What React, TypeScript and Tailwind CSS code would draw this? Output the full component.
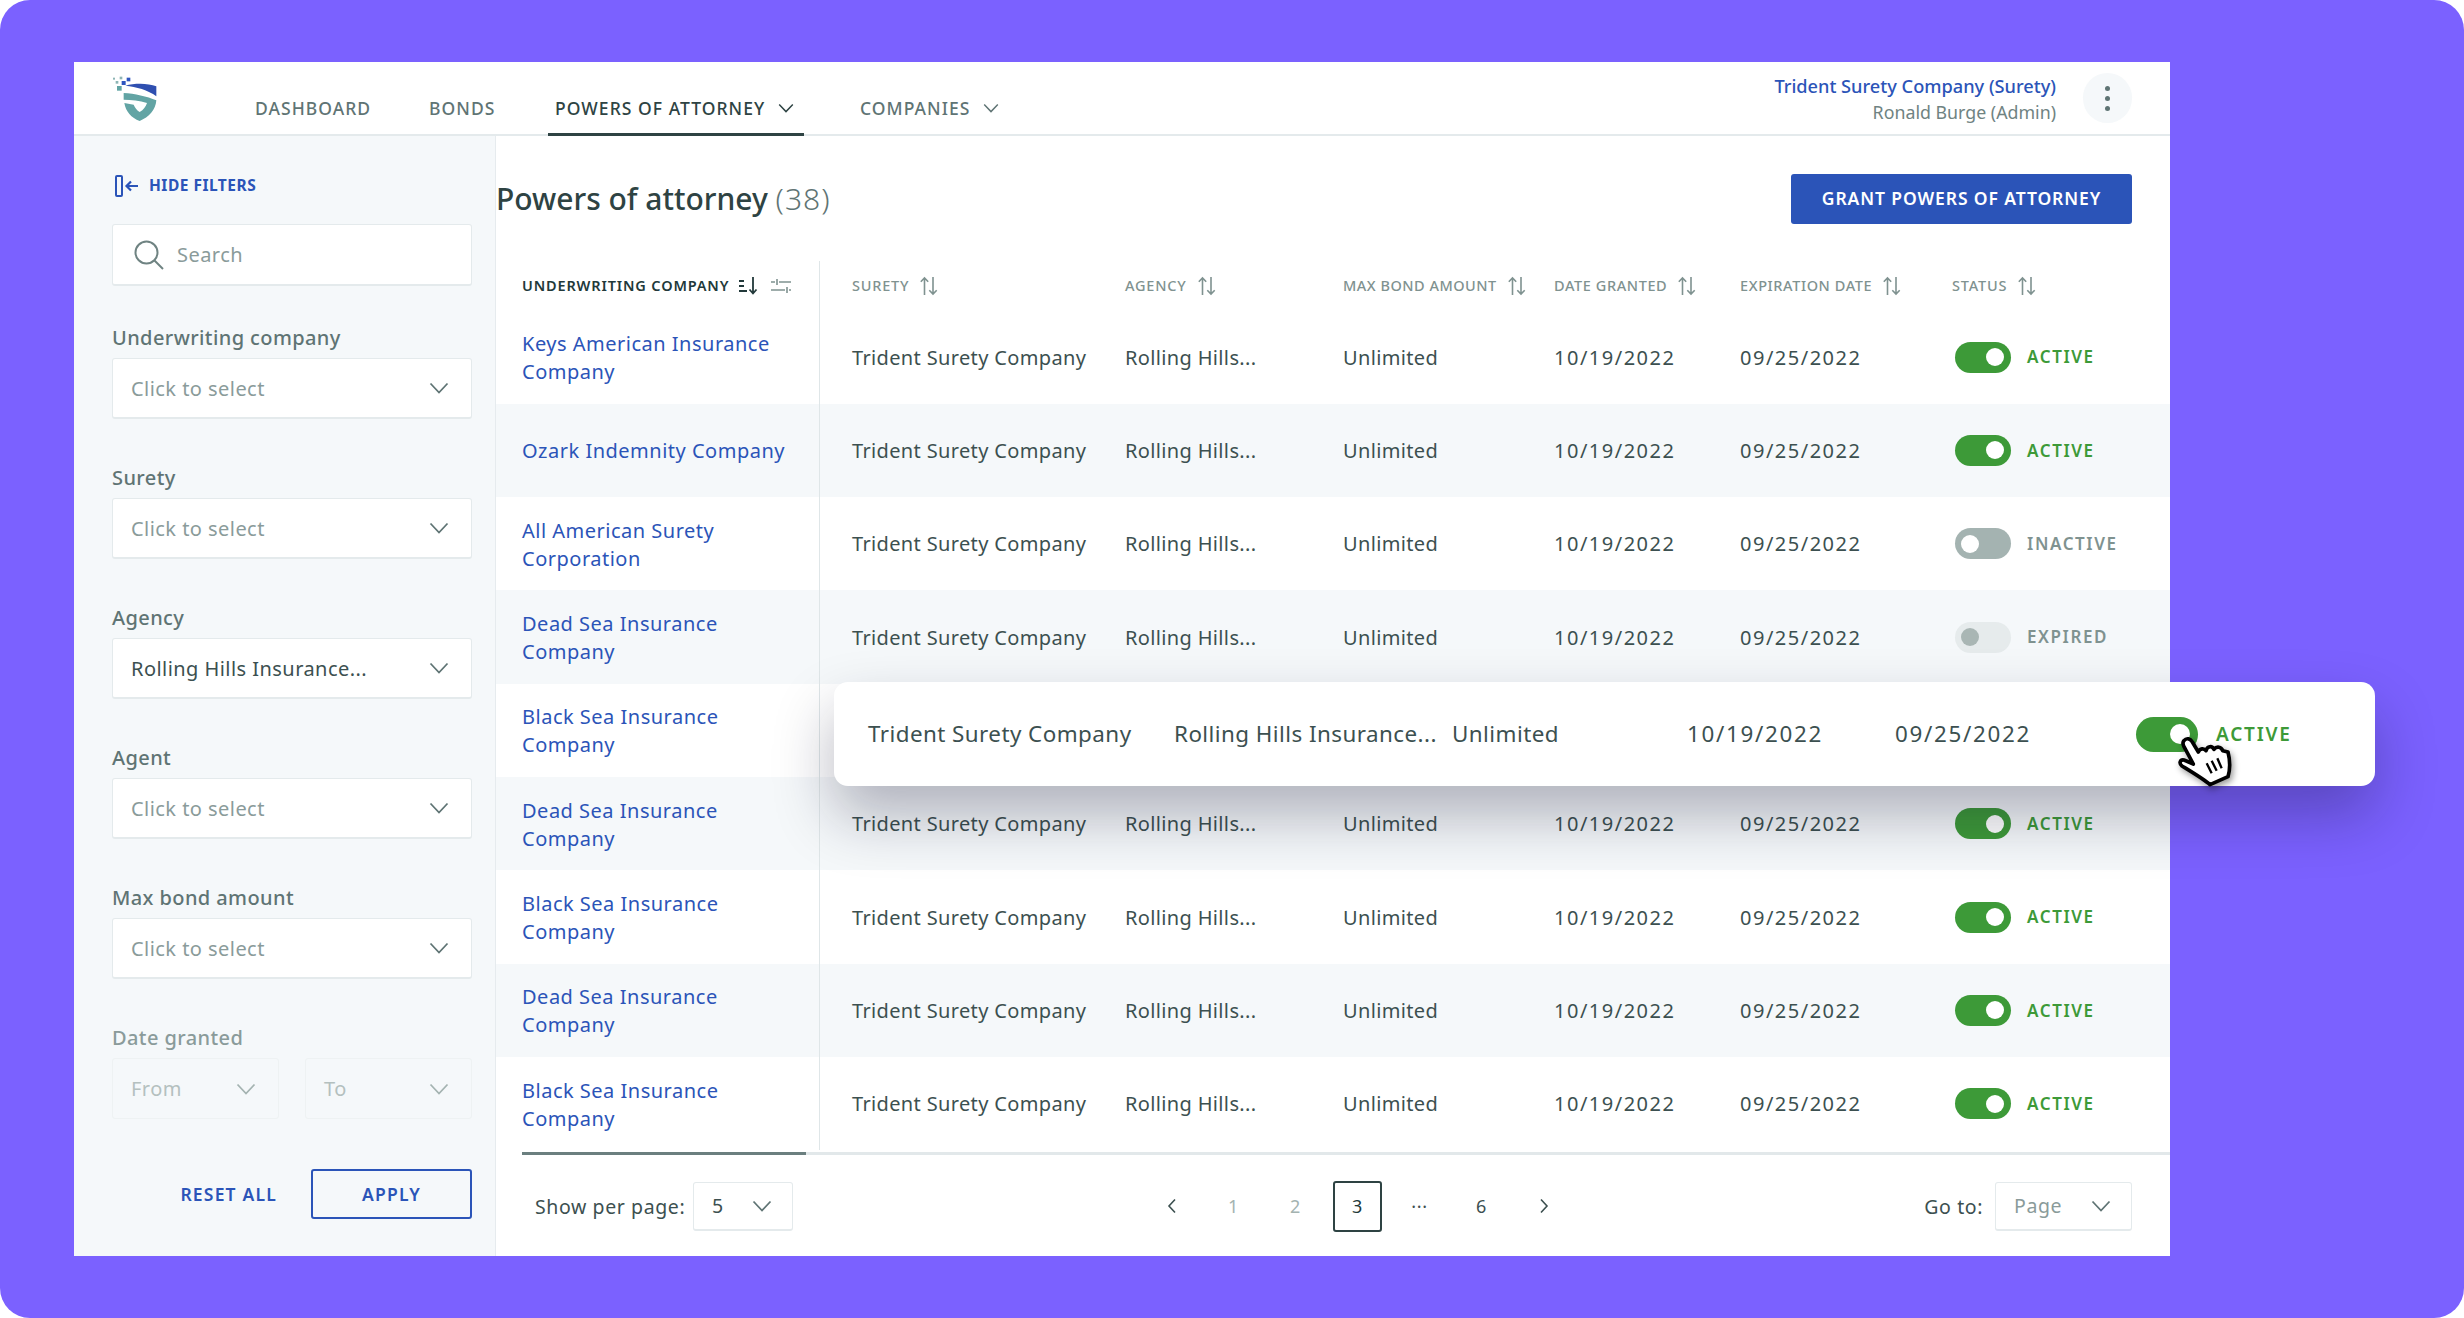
import React from "react";

const FONT = "font-['Noto_Sans','Liberation_Sans',sans-serif]";

function Chevron({ className = "text-[#5f7474]" }: { className?: string }) {
  return (
    <svg width="20" height="12" viewBox="0 0 20 12" fill="none" className={className}>
      <path d="M1.5 1.5 10 10.5l8.5-9" stroke="currentColor" strokeWidth="1.8" />
    </svg>
  );
}

function SortIcon() {
  return (
    <svg width="20" height="20" viewBox="0 0 20 20" fill="none" className="text-[#7f9290]">
      <path d="M5.5 19V2M1.8 5.8 5.5 2l3.7 3.8M14 1v17M10.3 14.2 14 18l3.7-3.8" stroke="currentColor" strokeWidth="1.6" />
    </svg>
  );
}

function Logo() {
  return (
    <svg width="44" height="46" viewBox="160 80 132 136">
      <path d="M197 108C225 100 265 100 290 110L290 140C265 120 230 112 197 108Z" fill="#2f4fb0" />
      <path d="M192 130C225 132 262 140 290 152C288 180 268 203 240 214C215 205 198 185 194 160L222 165C226 175 232 182 240 187C252 180 258 172 262 160C240 152 215 150 192 150Z" fill="#62a4a4" />
      <rect x="172" y="109" width="14" height="14" fill="#62a4a4" />
      <rect x="186" y="94" width="12" height="12" fill="#2f55c0" />
      <rect x="201" y="84" width="11" height="11" fill="#2f55c0" />
      <rect x="168" y="94" width="8" height="8" fill="#8db5b5" />
      <rect x="180" y="81" width="8" height="8" fill="#8db5b5" />
      <rect x="160" y="84" width="6" height="6" fill="#8db5b5" />
    </svg>
  );
}

function NavItem({ label, x, active, chevron }: { label: string; x: string; active?: boolean; chevron?: boolean }) {
  return (
    <div className={`absolute top-0 flex items-center gap-[13px] text-[17.5px] font-medium tracking-[1.05px] whitespace-nowrap ${active ? "text-[#2e4343]" : "text-[#5f7474]"} ${x}`}>
      <span>{label}</span>
      {chevron && <Chevron className={`w-[16px] h-[10px] ${active ? "text-[#2e4343]" : "text-[#5f7474]"}`} />}
    </div>
  );
}

function Field({ label, value, dark }: { label: string; value: string; dark?: boolean }) {
  return (
    <div className="flex flex-col mb-[44px]">
      <div className="h-[30px] flex items-center text-[20px] font-medium tracking-[0.4px] text-[#5f7474]">{label}</div>
      <div className="mt-[5px] h-[61px] bg-white border border-[#e4eaec] border-b-2 rounded-[3px] flex items-center justify-between pl-[18px] pr-[22px]">
        <span className={`text-[20px] tracking-[0.45px] pt-[1px] ${dark ? "text-[#3c5050]" : "text-[#8a9b9a]"}`}>{value}</span>
        <Chevron />
      </div>
    </div>
  );
}

function Toggle({ status }: { status: "ACTIVE" | "INACTIVE" | "EXPIRED" }) {
  if (status === "ACTIVE")
    return (
      <div className="flex items-center gap-[16px]">
        <div className="w-[56px] h-[31px] rounded-full bg-[#3d9a38] flex items-center justify-end pr-[7px]">
          <div className="w-[18px] h-[18px] rounded-full bg-white" />
        </div>
        <span className="text-[17px] font-semibold tracking-[1.6px] text-[#3d9a38]">ACTIVE</span>
      </div>
    );
  if (status === "INACTIVE")
    return (
      <div className="flex items-center gap-[16px]">
        <div className="w-[56px] h-[31px] rounded-full bg-[#a4b3b1] flex items-center pl-[6px]">
          <div className="w-[18px] h-[18px] rounded-full bg-white" />
        </div>
        <span className="text-[17px] font-semibold tracking-[1.6px] text-[#7f9290]">INACTIVE</span>
      </div>
    );
  return (
    <div className="flex items-center gap-[16px]">
      <div className="w-[56px] h-[31px] rounded-full bg-[#e6ebec] flex items-center pl-[6px]">
        <div className="w-[18px] h-[18px] rounded-full bg-[#a9b6b4]" />
      </div>
      <span className="text-[17px] font-semibold tracking-[1.6px] text-[#7f9290]">EXPIRED</span>
    </div>
  );
}

const GRID = "grid grid-cols-[324px_305px_218px_211px_186px_212px_218px]";

const rows: { l1: string; l2?: string; status: "ACTIVE" | "INACTIVE" | "EXPIRED"; hidden?: boolean }[] = [
  { l1: "Keys American Insurance", l2: "Company", status: "ACTIVE" },
  { l1: "Ozark Indemnity Company", status: "ACTIVE" },
  { l1: "All American Surety", l2: "Corporation", status: "INACTIVE" },
  { l1: "Dead Sea Insurance", l2: "Company", status: "EXPIRED" },
  { l1: "Black Sea Insurance", l2: "Company", status: "ACTIVE", hidden: true },
  { l1: "Dead Sea Insurance", l2: "Company", status: "ACTIVE" },
  { l1: "Black Sea Insurance", l2: "Company", status: "ACTIVE" },
  { l1: "Dead Sea Insurance", l2: "Company", status: "ACTIVE" },
  { l1: "Black Sea Insurance", l2: "Company", status: "ACTIVE" },
];

function HeadCell({ label, pl, track }: { label: string; pl?: boolean; track?: string }) {
  return (
    <div className={`flex items-center gap-[10px] text-[14.5px] font-medium text-[#7f9290] ${track ?? "tracking-[0.8px]"} ${pl ? "pl-[32px]" : ""}`}>
      <span>{label}</span>
      <SortIcon />
    </div>
  );
}

function PageNum({ n, tone }: { n: string; tone: string }) {
  return <div className={`w-[49px] h-[51px] flex items-center justify-center text-[18px] ${tone}`}>{n}</div>;
}

export default function App() {
  return (
    <div className={`w-[2464px] h-[1318px] bg-white ${FONT}`}>
      <div className="w-full h-full bg-[#7b61ff] rounded-[30px] pl-[74px] pt-[62px]">
        <div className="relative w-[2096px] h-[1194px] bg-white flex flex-col">
          {/* Header */}
          <header className="h-[74px] shrink-0 border-b-2 border-[#e4eaec] flex relative">
            <div className="ml-[39px] mt-[14px] w-[44px] h-[46px]">
              <Logo />
            </div>
            <div className="relative ml-[98px] w-[800px] mt-[33px]">
              <NavItem label="DASHBOARD" x="left-0" />
              <NavItem label="BONDS" x="left-[174px]" />
              <NavItem label="POWERS OF ATTORNEY" x="left-[300px]" active chevron />
              <NavItem label="COMPANIES" x="left-[605px]" chevron />
              <div className="absolute left-[293px] top-[38px] w-[256px] h-[3px] bg-[#2e4343]" />
            </div>
            <div className="ml-auto mr-[38px] flex items-center gap-[27px]">
              <div className="flex flex-col items-end pt-[3px]">
                <span className="text-[18.2px] leading-[25px] font-medium text-[#2b54b8]">Trident Surety Company (Surety)</span>
                <span className="text-[17.8px] leading-[27px] text-[#6f8382]">Ronald Burge (Admin)</span>
              </div>
              <div className="w-[49px] h-[50px] rounded-full bg-[#f5f8fa] flex flex-col items-center justify-center gap-[5px]">
                <div className="w-[5px] h-[5px] rounded-full bg-[#5f7474]" />
                <div className="w-[5px] h-[5px] rounded-full bg-[#5f7474]" />
                <div className="w-[5px] h-[5px] rounded-full bg-[#5f7474]" />
              </div>
            </div>
          </header>

          <div className="flex flex-1 min-h-0">
            {/* Sidebar */}
            <aside className="w-[422px] shrink-0 bg-[#f5f8fa] border-r border-[#e6ebee] pl-[38px] pr-[23px] pt-[38px]">
              <div className="h-[24px] flex items-center text-[#2b54b8]">
                <svg width="26" height="22" viewBox="0 0 26 22" fill="none" className="ml-[3px]">
                  <rect x="1" y="1" width="6" height="20" rx="1" stroke="currentColor" strokeWidth="2" />
                  <path d="M23 11H12M16 6.5 11.5 11l4.5 4.5" stroke="currentColor" strokeWidth="2.2" />
                </svg>
                <span className="ml-[8px] text-[15.5px] font-bold tracking-[0.5px]">HIDE FILTERS</span>
              </div>
              <div className="mt-[26px] h-[62px] bg-white border border-[#e4eaec] border-b-2 rounded-[3px] flex items-center pl-[20px]">
                <svg width="32" height="32" viewBox="0 0 32 32" fill="none" className="text-[#6f8382]">
                  <circle cx="13.5" cy="13.5" r="11" stroke="currentColor" strokeWidth="2" />
                  <path d="M21.5 21.5 30 30" stroke="currentColor" strokeWidth="2" />
                </svg>
                <span className="ml-[12px] text-[20px] tracking-[0.45px] text-[#8a9b9a]">Search</span>
              </div>
              <div className="mt-[37px] flex flex-col">
                <Field label="Underwriting company" value="Click to select" />
                <Field label="Surety" value="Click to select" />
                <Field label="Agency" value="Rolling Hills Insurance..." dark />
                <Field label="Agent" value="Click to select" />
                <Field label="Max bond amount" value="Click to select" />
              </div>
              <div className="h-[30px] flex items-center text-[20px] font-medium tracking-[0.4px] text-[#8a9b9a]">Date granted</div>
              <div className="mt-[5px] flex gap-[26px]">
                <div className="w-[167px] h-[61px] border border-[#eef2f3] rounded-[3px] flex items-center justify-between pl-[18px] pr-[22px]">
                  <span className="text-[20px] tracking-[0.45px] text-[#b4c0bf]">From</span>
                  <Chevron className="text-[#a4b3b1]" />
                </div>
                <div className="w-[167px] h-[61px] border border-[#eef2f3] rounded-[3px] flex items-center justify-between pl-[18px] pr-[22px]">
                  <span className="text-[20px] tracking-[0.45px] text-[#b4c0bf]">To</span>
                  <Chevron className="text-[#a4b3b1]" />
                </div>
              </div>
              <div className="mt-[50px] flex items-center justify-end gap-[34px]">
                <span className="text-[17.5px] font-semibold tracking-[1.2px] text-[#2b54b8]">RESET ALL</span>
                <div className="w-[161px] h-[50px] border-2 border-[#2b54b8] rounded-[3px] flex items-center justify-center text-[17.5px] font-semibold tracking-[1.2px] text-[#2b54b8]">
                  APPLY
                </div>
              </div>
            </aside>

            {/* Main */}
            <main className="flex-1 min-w-0 flex flex-col">
              <div className="h-[125px] shrink-0 flex items-center justify-between pr-[38px]">
                <h1 className="text-[30px] font-medium text-[#2e4343]">
                  Powers of attorney <span className="font-light tracking-[1px] text-[#5f7474]">(38)</span>
                </h1>
                <div className="w-[341px] h-[50px] bg-[#2b54b8] rounded-[3px] flex items-center justify-center text-[17.5px] font-semibold tracking-[0.9px] text-white">
                  GRANT POWERS OF ATTORNEY
                </div>
              </div>

              <div className={`${GRID} h-[49.5px] shrink-0`}>
                <div className="flex items-center pl-[26px] border-r border-[#dfe6e8] text-[14.5px] font-semibold tracking-[0.85px] text-[#22393a] whitespace-nowrap">
                  <span>UNDERWRITING COMPANY</span>
                  <svg width="22" height="20" viewBox="0 0 22 20" fill="none" className="ml-[9px] shrink-0">
                    <path d="M1 5h5M1 10h5M1 15h8M15 1v16M11.5 13.5 15 17.5l3.5-4" stroke="#22393a" strokeWidth="1.8" />
                  </svg>
                  <svg width="22" height="16" viewBox="0 0 22 16" fill="none" className="ml-[10px] shrink-0">
                    <path d="M1 4h4M9 4h12M7 1v6M1 12h14M19 12h2M17 9v6" stroke="#7f9290" strokeWidth="1.6" />
                  </svg>
                </div>
                <HeadCell label="SURETY" pl />
                <HeadCell label="AGENCY" />
                <HeadCell label="MAX BOND AMOUNT" track="tracking-[0.5px]" />
                <HeadCell label="DATE GRANTED" track="tracking-[0.6px]" />
                <HeadCell label="EXPIRATION DATE" track="tracking-[0.6px]" />
                <HeadCell label="STATUS" />
              </div>

              {rows.map((r, i) => (
                <div key={i} className={`${GRID} h-[93.33px] shrink-0 text-[20px] tracking-[0.35px] text-[#3c5050] ${i % 2 === 1 ? "bg-[#f5f8fa]" : "bg-white"}`}>
                  <div className="flex flex-col justify-center pl-[26px] pt-[2px] border-r border-[#dfe6e8] text-[#2b54b8] leading-[28px] tracking-[0.5px]">
                    <span>{r.l1}</span>
                    {r.l2 && <span>{r.l2}</span>}
                  </div>
                  {!r.hidden && (
                    <>
                      <div className="flex items-center pl-[32px] pt-[1px]">Trident Surety Company</div>
                      <div className="flex items-center pt-[1px]">Rolling Hills...</div>
                      <div className="flex items-center pt-[1px]">Unlimited</div>
                      <div className="flex items-center pt-[1px] tracking-[1.5px]">10/19/2022</div>
                      <div className="flex items-center pt-[1px] tracking-[1.5px]">09/25/2022</div>
                      <div className="flex items-center pl-[3px]">
                        <Toggle status={r.status} />
                      </div>
                    </>
                  )}
                </div>
              ))}

              <div className="mt-[1.5px] h-[3px] ml-[26px] bg-[#e2e8ea] shrink-0">
                <div className="w-[284px] h-full bg-[#6b7f7f]" />
              </div>

              {/* Footer */}
              <div className="flex-1 flex items-center pl-[38px] pr-[38px] pt-[2px] text-[19.5px] tracking-[0.6px] text-[#3c5050]">
                <div className="flex items-center w-[259px] justify-between whitespace-nowrap">
                  <span className="pl-[1px]">Show per page:</span>
                  <div className="w-[100px] h-[49px] shrink-0 border border-[#e4eaec] border-b-2 rounded-[3px] flex items-center justify-between pl-[18px] pr-[20px]">
                    <span>5</span>
                    <Chevron />
                  </div>
                </div>
                <div className="ml-[354px] flex items-center gap-[13px]">
                  <div className="w-[49px] flex justify-center">
                    <svg width="10" height="16" viewBox="0 0 10 16" fill="none"><path d="M8 1.5 2 8l6 6.5" stroke="#3c5050" strokeWidth="1.6" /></svg>
                  </div>
                  <PageNum n="1" tone="text-[#a4b3b1]" />
                  <PageNum n="2" tone="text-[#a4b3b1]" />
                  <div className="w-[49px] h-[51px] border-2 border-[#2e4343] rounded-[3px] flex items-center justify-center text-[18px] text-[#22393a]">3</div>
                  <PageNum n="···" tone="text-[#3c5050]" />
                  <PageNum n="6" tone="text-[#3c5050]" />
                  <div className="w-[49px] flex justify-center">
                    <svg width="10" height="16" viewBox="0 0 10 16" fill="none"><path d="M2 1.5 8 8l-6 6.5" stroke="#3c5050" strokeWidth="1.6" /></svg>
                  </div>
                </div>
                <div className="ml-auto flex items-center gap-[12px]">
                  <span>Go to:</span>
                  <div className="w-[137px] h-[49px] border border-[#e4eaec] border-b-2 rounded-[3px] flex items-center justify-between pl-[18px] pr-[20px]">
                    <span className="text-[#8a9b9a]">Page</span>
                    <Chevron />
                  </div>
                </div>
              </div>
            </main>
          </div>

          {/* Floating row */}
          <div className="absolute left-[760px] top-[620px] w-[1541px] h-[104px] bg-white rounded-[14px] shadow-[0_30px_60px_rgba(16,16,48,0.3)] flex items-center pl-[34px] text-[22.4px] tracking-[0.45px] text-[#3c5050] whitespace-nowrap">
            <span className="w-[306px] shrink-0">Trident Surety Company</span>
            <span className="w-[278px] shrink-0">Rolling Hills Insurance...</span>
            <span className="w-[235px] shrink-0">Unlimited</span>
            <span className="w-[208px] shrink-0 tracking-[1.7px]">10/19/2022</span>
            <span className="w-[241px] shrink-0 tracking-[1.7px]">09/25/2022</span>
            <div className="w-[62px] h-[35px] rounded-full bg-[#3d9a38] flex items-center justify-end pr-[8px] shrink-0">
              <div className="w-[20px] h-[20px] rounded-full bg-white" />
            </div>
            <span className="ml-[18px] text-[19px] font-semibold tracking-[1.8px] text-[#3d9a38]">ACTIVE</span>
          </div>

          {/* Hand cursor */}
          <svg width="90" height="80" viewBox="0 0 270 240" className="absolute left-[2086px] top-[658px] drop-shadow-[2px_3px_3px_rgba(0,0,0,0.4)]" fill="none">
            <path d="M72 62C80 52 92 56 97 66L115 96C120 84 132 84 138 92C142 78 156 76 162 88C170 78 184 80 188 92L204 96C210 120 210 150 204 170L150 194C135 180 110 165 66 138C56 130 60 118 72 120L100 132L72 80C68 72 68 66 72 62Z" fill="white" stroke="black" strokeWidth="11" strokeLinejoin="round" />
            <path d="M140 130 155 160M155 122 170 152M172 115 185 145" stroke="black" strokeWidth="7" />
          </svg>
        </div>
      </div>
    </div>
  );
}
